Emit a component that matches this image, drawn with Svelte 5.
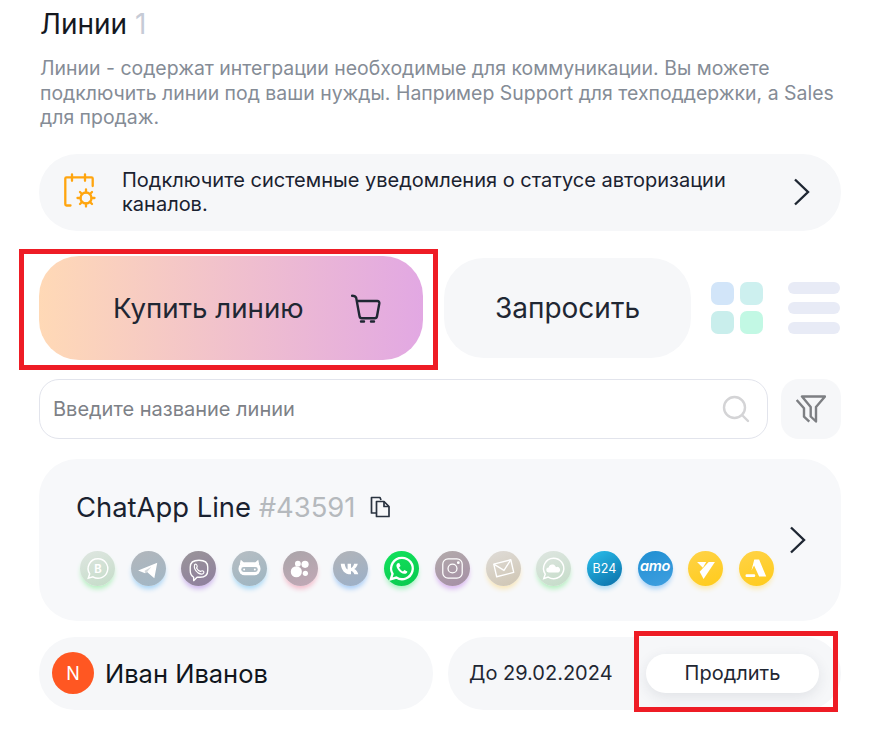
<script>
  const channels = [
    { id: 'wab', bg: 'linear-gradient(160deg,#dfe6e1,#c4dcc8)', glow: '#b5efc0' },
    { id: 'tg', bg: 'linear-gradient(160deg,#b2b6bb,#a1b7c6)', glow: '#a8d4f5' },
    { id: 'viber', bg: 'linear-gradient(160deg,#9a9599,#8f7f9f)', glow: '#cdb5ec' },
    { id: 'bot', bg: 'linear-gradient(160deg,#b7bec3,#9db5c2)', glow: '#a8d8f5' },
    { id: 'dots', bg: 'linear-gradient(160deg,#aaa5a9,#c2a8b6)', glow: '#f3bccb' },
    { id: 'vk', bg: 'linear-gradient(160deg,#b2b4b8,#9bb0c9)', glow: '#a8cdf7' },
    { id: 'wa', bg: 'linear-gradient(160deg,#12e25c,#09c94e)', glow: '#a6f2c0' },
    { id: 'ig', bg: 'linear-gradient(160deg,#b3abab,#a58ea6)', glow: '#d9b5f0' },
    { id: 'mail', bg: 'linear-gradient(160deg,#dfdcd8,#cfc5b2)', glow: '#f8e6b8' },
    { id: 'cloud', bg: 'linear-gradient(160deg,#dfe6e1,#c4dcc8)', glow: '#b5efc0' },
    { id: 'b24', bg: 'linear-gradient(150deg,#2bbfec,#0a6fa8)', glow: '#b0dcf3' },
    { id: 'amo', bg: 'linear-gradient(160deg,#1f8fd2,#409fe0)', glow: '#a9d2f7' },
    { id: 'y1', bg: 'linear-gradient(160deg,#ffd348,#ffcb1a)', glow: '#fbeab0' },
    { id: 'y2', bg: 'linear-gradient(160deg,#ffd348,#ffcb1a)', glow: '#fbeab0' }
  ];
</script>

<main class="page">
  <h1 class="title">Линии <span class="count">1</span></h1>
  <p class="desc">Линии - содержат интеграции необходимые для коммуникации. Вы можете подключить линии под ваши нужды. Например Support для техподдержки, а Sales для продаж.</p>

  <div class="banner">
    <svg class="cal" width="32" height="36" viewBox="0 0 32 36" fill="none" stroke="#ffa50f" stroke-width="2.300" stroke-linecap="round" stroke-linejoin="round">
      <path d="M6.500 32.500H2.500c-.8 0-1.200-.4-1.200-1.200V5.500c0-.8.4-1.200 1.200-1.200h25c.8 0 1.200.4 1.200 1.200V13"/>
      <path d="M8 1.300v6.500M21 1.300v6.500"/>
      <circle cx="22" cy="25" r="5.500"/>
      <path d="M22 16.500v3M22 30.500v3M13.500 25h3M27.500 25h3M16 19l2 2M26 29l2 2M16 31l2-2M26 21l2-2"/>
    </svg>
    <span class="banner-text">Подключите системные уведомления о статусе авторизации каналов.</span>
    <svg class="chev" width="18" height="28" viewBox="0 0 18 28" fill="none" stroke="#1f2733" stroke-width="2.400"><path d="M2 1.500 15 14 2 26.500"/></svg>
  </div>

  <div class="actions">
    <button class="buy">
      <span class="buy-label">Купить линию</span>
      <svg class="cart" width="30" height="30" viewBox="0 0 30 30" fill="none" stroke="#1f2733" stroke-width="2.400" stroke-linecap="round" stroke-linejoin="round">
        <path d="M1 2.700c2.500 0 3.600.4 4.200 2.200L8.500 23c.2 1.300 1 2.300 2.300 2.300h13c1.300 0 2-.8 2.200-2L28.300 10.500c.2-1.600-.5-2.500-2-2.500H6.300"/>
        <path d="M10 28.500h3M20 28.500h3"/>
      </svg>
    </button>
    <button class="request">Запросить</button>
    <div class="grid-toggle">
      <i style="background:#d2e5f9"></i><i style="background:#cdf0ef"></i><i style="background:#c9eeec"></i><i style="background:#c2f8e4"></i>
    </div>
    <div class="list-toggle"><i></i><i></i><i></i></div>
  </div>

  <div class="search-row">
    <div class="search">
      <span class="placeholder">Введите название линии</span>
      <svg width="28" height="28" viewBox="0 0 28 28" fill="none" stroke="#d4d4d6" stroke-width="2.400" stroke-linecap="round"><circle cx="12.500" cy="12.500" r="10.500"/><path d="M21 21l5 5"/></svg>
    </div>
    <button class="filter" aria-label="Фильтр">
      <svg width="30" height="28" viewBox="-1 -1 30 28" fill="none" stroke="#7d7f83" stroke-width="2.400" stroke-linejoin="round">
        <path d="M5 .5h23L19 11v14.500l-5.300-5v-9.500z"/>
        <path d="M-.3 4 7 12.300v8.400l5.300 5"/>
      </svg>
    </button>
  </div>

  <section class="card">
    <div class="card-body">
      <div class="line-title">
        <span>ChatApp Line <span class="line-id">#43591</span></span>
        <svg width="21" height="22" viewBox="0 0 21 22" fill="none" stroke="#2a3340" stroke-width="1.700" stroke-linejoin="round">
          <path d="M7 17H1.500V1.500h8.500l1 2.500"/>
          <path d="M6.500 5.500h7.500l5 5v10H6.500z"/>
          <path d="M14 5.500v5h5"/>
        </svg>
      </div>
      <div class="channels">
        {#each channels as c}
          <div class="chan" style="--bg:{c.bg};--glow:{c.glow}">
            {#if c.id === 'wab'}
              <svg viewBox="0 0 36 36" fill="none" stroke="#fff" stroke-width="1.500"><path d="M18.500 8a10 10 0 1 1-5.200 18.500L8.500 28l1.500-4.500A10 10 0 0 1 18.500 8z"/><text x="18.500" y="22.500" class="ic-b">B</text></svg>
            {:else if c.id === 'tg'}
              <svg viewBox="0 0 36 36"><path d="M7.300 20 27 12l-3 16-7.500-6.500-2 1.500z" fill="#fff"/><path d="M14.500 23l-.5-2.700 7-4-4.500 5.200z" fill="#d5d9dc"/></svg>
            {:else if c.id === 'viber'}
              <svg viewBox="0 0 36 36" fill="none" stroke="#fff" stroke-width="1.400" stroke-linejoin="round"><path d="M13 27v3.500l3.500-3.500h3c5 0 8-2 8-7v-3.500c0-5-3-7-9-7s-9 2-9 7V20c0 3.500 1.200 5.500 3.500 7z"/><path d="M14 14c1-1 2-.5 2.500 1s0 1.500-.5 2.500c1 2 2 3 4 3.500 1-.5 1.500-1 2.500-.5s1.500 1.500.5 2.500c-1.500 1.500-3 1-5.500-.5-2.500-2-4.500-5-3.500-8.500z" stroke-width="1.200"/></svg>
            {:else if c.id === 'bot'}
              <svg viewBox="0 0 36 36"><rect x="6.700" y="11.500" width="22.600" height="13.500" rx="6.500" fill="#fff"/><rect x="9.500" y="16.500" width="17" height="5" rx="2.500" fill="#aebcc4"/><circle cx="12.500" cy="19" r="1" fill="#fff"/><circle cx="23.500" cy="19" r="1" fill="#fff"/><path d="M8 14 9 9l3.500 3zM28 14 27 9l-3.500 3z" fill="#fff"/></svg>
            {:else if c.id === 'dots'}
              <svg viewBox="0 0 36 36" fill="#fff"><circle cx="13.700" cy="21.300" r="5.700"/><circle cx="15.300" cy="13" r="3"/><circle cx="22.700" cy="13.700" r="3.700"/><circle cx="23" cy="23" r="2.700"/></svg>
            {:else if c.id === 'vk'}
              <svg viewBox="0 0 36 36"><path d="M8 13h4c.4 3 1.500 5 3 6v-6h3.500v4.500c1.500-.5 2.700-2.300 3.200-4.500h3.800c-.6 2.500-2 4.500-3.700 5.500 2 .9 3.500 3 4.200 5.500h-4c-.6-2-2-3.300-3.500-3.500V24H18C12.500 24 8.500 20 8 13z" fill="#fff"/></svg>
            {:else if c.id === 'wa'}
              <svg viewBox="0 0 36 36" fill="none" stroke="#fff" stroke-width="2.400"><path d="M18.500 7a11 11 0 1 1-5.800 20.300L7 29l1.800-5.500A11 11 0 0 1 18.500 7z"/><path d="M14 12.500c-1.500 1-1.800 3 0 6s4.500 5 7 5c1.700 0 3-1 3-2.500l-3-1.500-1.500 1.500c-2-1-3-2-4-4l1.500-1.500-1.300-3.200z" fill="#fff" stroke="none"/></svg>
            {:else if c.id === 'ig'}
              <svg viewBox="0 0 36 36" fill="none" stroke="#fff" stroke-width="1.300"><rect x="8" y="8" width="20" height="20" rx="5.500"/><circle cx="18" cy="18" r="4.600"/><circle cx="24" cy="12" r=".8" fill="#fff"/></svg>
            {:else if c.id === 'mail'}
              <svg viewBox="0 0 36 36" fill="none" stroke="#fff" stroke-width="1.400" stroke-linejoin="round"><path d="M8 13.500 25.500 9l3 13L11 26.500z"/><path d="M8 13.500l10.500 6.500 7-11"/></svg>
            {:else if c.id === 'cloud'}
              <svg viewBox="0 0 36 36" fill="none" stroke="#fff" stroke-width="1.500"><path d="M18 7.500a10.500 10.500 0 1 1-5.500 19.400L8 28.300l1.500-4.500A10.500 10.500 0 0 1 18 7.500z"/><path d="M13 22a2.500 2.500 0 0 1 0-5c.5-2.500 2.500-3.500 4.500-3 1.500.3 2.500 1.300 3 2.600a2.800 2.800 0 0 1 2.500 5.400z" fill="#fff" stroke="none"/></svg>
            {:else if c.id === 'b24'}
              <span class="ic-txt">B24</span>
            {:else if c.id === 'amo'}
              <span class="ic-amo">amo</span>
            {:else if c.id === 'y1'}
              <svg viewBox="0 0 36 36" fill="#fff"><path d="M9.300 11.300h9.400l-3.400 6z"/><path d="M21.300 11.300h6.400L16 28.700l-4-7.400z"/></svg>
            {:else}
              <svg viewBox="0 0 36 36" fill="#fff"><path d="M15.700 8.700h5L28 26.300h-7.300L15.500 15l-2.700 5z"/><rect x="6.700" y="24" width="10" height="2.700" rx="1.300"/></svg>
            {/if}
          </div>
        {/each}
      </div>
    </div>
    <svg class="chev" width="18" height="28" viewBox="0 0 18 28" fill="none" stroke="#1f2733" stroke-width="2.400"><path d="M2 1.500 15 14 2 26.500"/></svg>
  </section>

  <div class="bottom">
    <div class="pill user">
      <span class="avatar">N</span>
      <span class="name">Иван Иванов</span>
    </div>
    <div class="pill sub">
      <span class="until">До 29.02.2024</span>
      <button class="extend">Продлить</button>
    </div>
  </div>

  <div class="mark mark-buy"></div>
  <div class="mark mark-extend"></div>
</main>

<style>
  :global(body) { margin: 0; background: #fff; }
  .page {
    position: relative;
    width: 873px;
    height: 735px;
    box-sizing: border-box;
    padding: 6px 32px 0 39px;
    font-family: Inter, sans-serif;
    color: #1f2733;
    overflow: hidden;
  }
  .title { margin: 0; font-size: 28px; line-height: 36px; font-weight: 400; color: #14181f; padding-left: 1px; }
  .count { color: #c6cbd6; }
  .desc { margin: 14px 0 0; padding-left: 1px; font-size: 19.450px; line-height: 24.500px; color: #858c96; }
  .banner {
    margin-top: 24px;
    height: 77px;
    border-radius: 38px;
    background: #f6f7f9;
    display: flex;
    align-items: center;
    padding: 0 30px 0 25px;
  }
  .cal { flex: none; margin-right: 26px; margin-top: -3px; }
  .banner-text { flex: 1; font-size: 20px; line-height: 24px; max-width: 640px; color: #1a2230; }
  .banner .chev { margin-left: auto; }
  .actions { margin-top: 25px; display: flex; align-items: center; }
  button { font-family: inherit; border: 0; color: inherit; padding: 0; }
  .buy {
    position: relative;
    width: 384px;
    height: 104px;
    border-radius: 40px;
    background: linear-gradient(90deg, #ffd9b6 0%, #e2a8e3 100%);
    display: flex;
    align-items: center;
    font-size: 27.700px;
    padding-left: 74px;
    box-sizing: border-box;
  }
  .buy-label { flex: none; }
  .cart { margin-left: 47px; }
  .request {
    margin-left: 21px;
    width: 247px;
    height: 100px;
    border-radius: 40px;
    background: #f6f7f9;
    font-size: 28px;
  }
  .grid-toggle {
    margin-left: 20px;
    width: 52px;
    display: grid;
    grid-template-columns: 23px 23px;
    gap: 6px;
  }
  .grid-toggle i { display: block; height: 23px; border-radius: 7px; }
  .list-toggle { margin-left: 25px; width: 52px; display: flex; flex-direction: column; gap: 8px; }
  .list-toggle i { display: block; height: 12px; border-radius: 6px; background: #e8ebf6; }
  .search-row { margin-top: 19px; display: flex; gap: 13px; }
  .search {
    flex: 1;
    height: 60px;
    box-sizing: border-box;
    border: 1px solid #e2e4ec;
    border-radius: 20px;
    display: flex;
    align-items: center;
    justify-content: space-between;
    padding: 0 17px 0 13px;
  }
  .placeholder { font-size: 20px; color: #7d8187; }
  .filter {
    width: 60px; height: 60px; border-radius: 18px; background: #f6f7f9;
    display: flex; align-items: center; justify-content: center;
  }
  .card {
    margin-top: 20px;
    height: 162px;
    border-radius: 38px;
    background: #f7f8fa;
    display: flex;
    align-items: center;
    padding: 0 34px 0 37px;
    box-sizing: border-box;
  }
  .card-body { flex: 1; min-width: 0; }
  .line-title { display: flex; align-items: center; gap: 15px; font-size: 27.400px; line-height: 32px; color: #1a2230; margin-top: -3px; }
  .line-id { color: #b5b9bd; }
  .channels { margin-top: 28px; margin-left: 4px; display: flex; gap: 15.700px; }
  .chan {
    position: relative;
    flex: none;
    width: 35px;
    height: 35px;
    border-radius: 50%;
    background: var(--bg);
    box-shadow: 0 4px 5px -1px var(--glow);
    display: flex;
    align-items: center;
    justify-content: center;
    overflow: hidden;
  }
  .chan svg { width: 35px; height: 35px; display: block; }
  .ic-b { font-family: Inter, sans-serif; font-size: 11.500px; font-weight: 700; fill: #fff; stroke: none; text-anchor: middle; }
  .ic-txt { color: #fff; font-size: 12.500px; letter-spacing: 0; }
  .ic-amo { color: #fff; font-size: 14.500px; font-weight: 600; font-style: italic; letter-spacing: -0.300px; line-height: 1; margin-top: -3px; }
  .bottom { margin-top: 16px; display: flex; gap: 15px; }
  .pill {
    flex: none;
    height: 73px;
    border-radius: 36px;
    background: #f6f7f9;
    display: flex;
    align-items: center;
    box-sizing: border-box;
  }
  .user { width: 394px; padding-left: 13px; gap: 11px; }
  .avatar {
    width: 42px; height: 42px; border-radius: 50%;
    background: #ff5722; color: #fff;
    display: flex; align-items: center; justify-content: center;
    font-size: 18px;
  }
  .name { font-size: 25.500px; color: #10151c; }
  .sub { width: 393px; padding: 0 22px 0 21px; justify-content: space-between; }
  .until { font-size: 20px; color: #1f2733; }
  .extend {
    width: 173px; height: 39px; border-radius: 20px; background: #fff;
    font-size: 20px; box-shadow: 0 4px 14px rgba(40, 50, 70, .1);
  }
  .mark { position: absolute; border: 5px solid #ee1c25; box-sizing: border-box; pointer-events: none; }
  .mark-buy { left: 19px; top: 249px; width: 419px; height: 121px; }
  .mark-extend { left: 634px; top: 631px; width: 204px; height: 81px; }
</style>
